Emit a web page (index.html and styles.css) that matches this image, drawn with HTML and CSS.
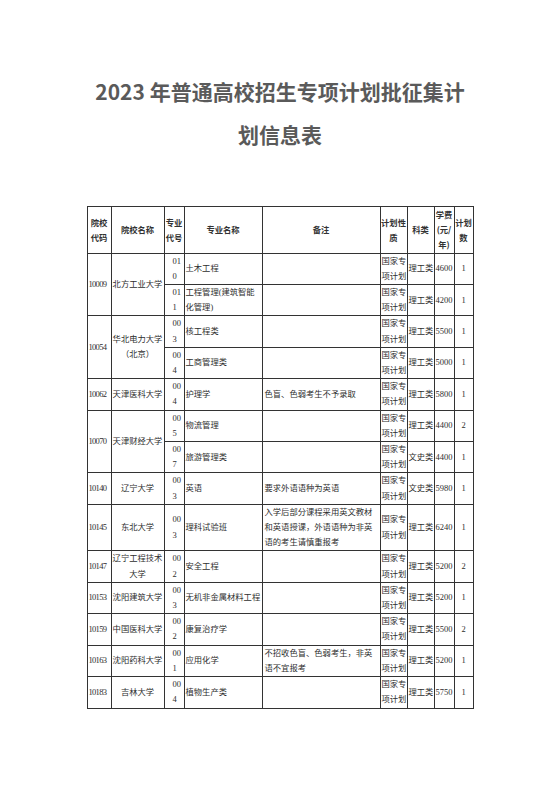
FILE: index.html
```html
<!DOCTYPE html>
<html lang="zh-CN">
<head>
<meta charset="utf-8">
<title>2023年普通高校招生专项计划批征集计划信息表</title>
<link rel="stylesheet" href="styles.css">
</head>
<body>
<div class="page">
  <h1 class="title">2023 年普通高校招生专项计划批征集计<br>划信息表</h1>
  <table class="plan">
    <colgroup>
      <col class="c-code"><col class="c-name"><col class="c-mcode"><col class="c-major"><col class="c-note"><col class="c-type"><col class="c-cat"><col class="c-fee"><col class="c-num">
    </colgroup>
    <thead>
      <tr>
        <th>院校<br>代码</th>
        <th>院校名称</th>
        <th>专业<br>代号</th>
        <th>专业名称</th>
        <th>备注</th>
        <th>计划性<br>质</th>
        <th>科类</th>
        <th>学费<br>(元/<br>年)</th>
        <th>计划<br>数</th>
      </tr>
    </thead>
    <tbody>
      <tr>
        <td class="code" rowspan="2">10009</td>
        <td class="name" rowspan="2">北方工业大学</td>
        <td class="mcode">010</td>
        <td class="major">土木工程</td>
        <td class="note"></td>
        <td class="type">国家专项计划</td>
        <td class="cat">理工类</td>
        <td class="fee">4600</td>
        <td class="num">1</td>
      </tr>
      <tr>
        <td class="mcode">011</td>
        <td class="major">工程管理(建筑智能化管理)</td>
        <td class="note"></td>
        <td class="type">国家专项计划</td>
        <td class="cat">理工类</td>
        <td class="fee">4200</td>
        <td class="num">1</td>
      </tr>
      <tr>
        <td class="code" rowspan="2">10054</td>
        <td class="name" rowspan="2">华北电力大学（北京）</td>
        <td class="mcode">003</td>
        <td class="major">核工程类</td>
        <td class="note"></td>
        <td class="type">国家专项计划</td>
        <td class="cat">理工类</td>
        <td class="fee">5500</td>
        <td class="num">1</td>
      </tr>
      <tr>
        <td class="mcode">004</td>
        <td class="major">工商管理类</td>
        <td class="note"></td>
        <td class="type">国家专项计划</td>
        <td class="cat">理工类</td>
        <td class="fee">5000</td>
        <td class="num">1</td>
      </tr>
      <tr>
        <td class="code">10062</td>
        <td class="name">天津医科大学</td>
        <td class="mcode">004</td>
        <td class="major">护理学</td>
        <td class="note">色盲、色弱考生不予录取</td>
        <td class="type">国家专项计划</td>
        <td class="cat">理工类</td>
        <td class="fee">5800</td>
        <td class="num">1</td>
      </tr>
      <tr>
        <td class="code" rowspan="2">10070</td>
        <td class="name" rowspan="2">天津财经大学</td>
        <td class="mcode">005</td>
        <td class="major">物流管理</td>
        <td class="note"></td>
        <td class="type">国家专项计划</td>
        <td class="cat">理工类</td>
        <td class="fee">4400</td>
        <td class="num">2</td>
      </tr>
      <tr>
        <td class="mcode">007</td>
        <td class="major">旅游管理类</td>
        <td class="note"></td>
        <td class="type">国家专项计划</td>
        <td class="cat">文史类</td>
        <td class="fee">4400</td>
        <td class="num">1</td>
      </tr>
      <tr>
        <td class="code">10140</td>
        <td class="name">辽宁大学</td>
        <td class="mcode">003</td>
        <td class="major">英语</td>
        <td class="note">要求外语语种为英语</td>
        <td class="type">国家专项计划</td>
        <td class="cat">文史类</td>
        <td class="fee">5980</td>
        <td class="num">1</td>
      </tr>
      <tr>
        <td class="code">10145</td>
        <td class="name">东北大学</td>
        <td class="mcode">003</td>
        <td class="major">理科试验班</td>
        <td class="note">入学后部分课程采用英文教材和英语授课，外语语种为非英语的考生请慎重报考</td>
        <td class="type">国家专项计划</td>
        <td class="cat">理工类</td>
        <td class="fee">6240</td>
        <td class="num">1</td>
      </tr>
      <tr>
        <td class="code">10147</td>
        <td class="name">辽宁工程技术大学</td>
        <td class="mcode">002</td>
        <td class="major">安全工程</td>
        <td class="note"></td>
        <td class="type">国家专项计划</td>
        <td class="cat">理工类</td>
        <td class="fee">5200</td>
        <td class="num">2</td>
      </tr>
      <tr>
        <td class="code">10153</td>
        <td class="name">沈阳建筑大学</td>
        <td class="mcode">003</td>
        <td class="major">无机非金属材料工程</td>
        <td class="note"></td>
        <td class="type">国家专项计划</td>
        <td class="cat">理工类</td>
        <td class="fee">5200</td>
        <td class="num">1</td>
      </tr>
      <tr>
        <td class="code">10159</td>
        <td class="name">中国医科大学</td>
        <td class="mcode">002</td>
        <td class="major">康复治疗学</td>
        <td class="note"></td>
        <td class="type">国家专项计划</td>
        <td class="cat">理工类</td>
        <td class="fee">5500</td>
        <td class="num">2</td>
      </tr>
      <tr>
        <td class="code">10163</td>
        <td class="name">沈阳药科大学</td>
        <td class="mcode">001</td>
        <td class="major">应用化学</td>
        <td class="note">不招收色盲、色弱考生，非英语不宜报考</td>
        <td class="type">国家专项计划</td>
        <td class="cat">理工类</td>
        <td class="fee">5200</td>
        <td class="num">1</td>
      </tr>
      <tr>
        <td class="code">10183</td>
        <td class="name">吉林大学</td>
        <td class="mcode">004</td>
        <td class="major">植物生产类</td>
        <td class="note"></td>
        <td class="type">国家专项计划</td>
        <td class="cat">理工类</td>
        <td class="fee">5750</td>
        <td class="num">1</td>
      </tr>
    </tbody>
  </table>
</div>
</body>
</html>
```

FILE: styles.css
```css
html, body {
  margin: 0;
  padding: 0;
  background: #ffffff;
}

.page {
  width: 560px;
  padding-top: 70px;
}

.title {
  margin: 0 0 50px 0;
  text-align: center;
  font-family: "Noto Sans CJK SC", "Noto Sans", sans-serif;
  font-weight: 700;
  font-size: 21px;
  line-height: 43px;
  color: #5a5a5a;
}

.plan {
  margin: 0 auto;
  width: 386px;
  table-layout: fixed;
  border-collapse: collapse;
  font-family: "Liberation Serif", "Noto Sans CJK SC", serif;
  font-size: 8.3px;
  line-height: 15.2px;
  color: #2e2e2e;
}

.c-code { width: 24px; }
.c-name { width: 53px; }
.c-mcode { width: 20px; }
.c-major { width: 78px; }
.c-note { width: 118px; }
.c-type { width: 27px; }
.c-cat { width: 27px; }
.c-fee { width: 20px; }
.c-num { width: 19px; }

.plan th,
.plan td {
  border: 1px solid #333333;
  padding: 0 1px;
  vertical-align: middle;
  word-break: break-all;
  overflow: hidden;
}

.plan th {
  font-family: "Noto Sans CJK SC", sans-serif;
  font-weight: 700;
  color: #333333;
  text-align: center;
  padding: 0;
}

.plan td {
  font-weight: 400;
}

.plan .code {
  text-align: left;
  padding-left: 1px;
  padding-right: 0;
  font-size: 8.5px;
  letter-spacing: -0.7px;
}

.plan .name {
  text-align: center;
  padding: 0 1px;
}

.plan .mcode {
  text-align: left;
  padding: 0 0 0 8px;
  font-size: 8.5px;
}

.plan .major {
  text-align: left;
  padding: 0 0 0 1px;
}

.plan .note {
  text-align: left;
  padding: 0 4px 0 2px;
}

.plan .type {
  text-align: left;
  padding: 0 0 0 1px;
}

.plan .cat {
  text-align: left;
  padding: 0 0 0 1px;
}

.plan .fee {
  text-align: left;
  padding: 0 0 0 1px;
  font-size: 8.5px;
}

.plan .num {
  text-align: center;
  font-size: 8.5px;
}
```
